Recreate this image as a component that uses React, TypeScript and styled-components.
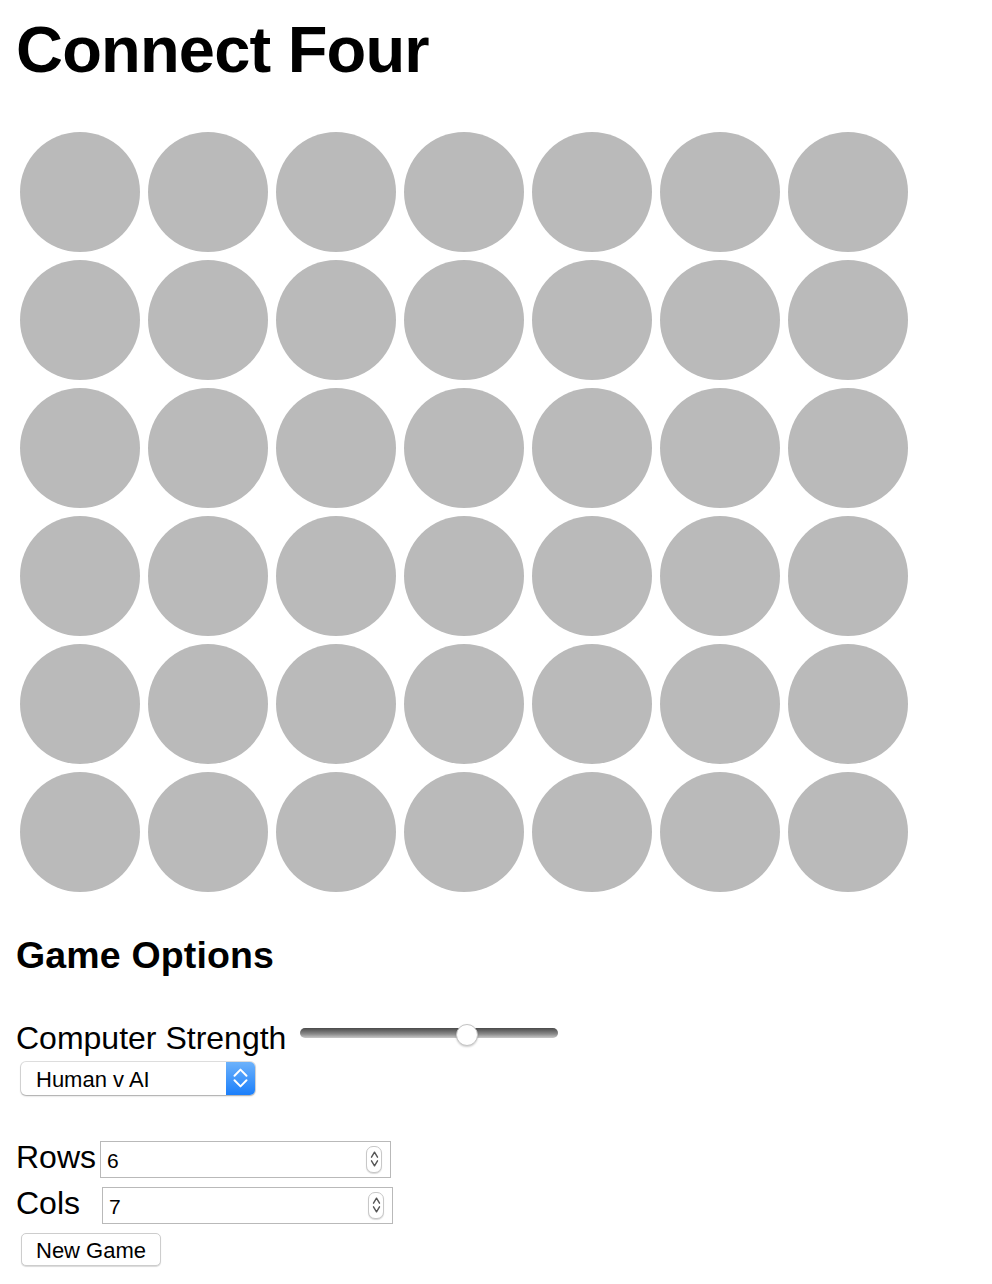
import React, { useState } from "react";
import styled, { createGlobalStyle } from "styled-components";

const GlobalStyle = createGlobalStyle`
  body {
    margin: 0;
    background: #fff;
    color: #000;
    font-family: "Liberation Sans", Arial, Helvetica, sans-serif;
  }
`;

const ROWS = 6;
const COLS = 7;

const Page = styled.div`
  display: flex;
  flex-direction: column;
  align-items: flex-start;
  padding: 0 16px 20px;
`;

const Title = styled.h1`
  margin: 17px 0 0;
  font-size: 65px;
  line-height: 65px;
  font-weight: 700;
  letter-spacing: -0.8px;
`;

const Board = styled.div<{ $cols: number }>`
  display: grid;
  grid-template-columns: repeat(${(p) => p.$cols}, 128px);
  grid-auto-rows: 128px;
  margin-top: 46px;
`;

const Cell = styled.div`
  display: flex;
  align-items: center;
  justify-content: center;
`;

const Disc = styled.div<{ $player: number }>`
  width: 120px;
  height: 120px;
  border-radius: 50%;
  background: ${(p) =>
    p.$player === 1 ? "#e53935" : p.$player === 2 ? "#fdd835" : "#bababa"};
`;

const SectionTitle = styled.h2`
  margin: 41px 0 0;
  font-size: 37.5px;
  line-height: 37.5px;
  font-weight: 700;
  letter-spacing: 0.15px;
`;

const Row = styled.div<{ $gap: number; $top: number }>`
  display: flex;
  align-items: flex-start;
  gap: ${(p) => p.$gap}px;
  margin-top: ${(p) => p.$top}px;
`;

const Label = styled.label`
  font-size: 32px;
  line-height: 32px;
`;

const Slider = styled.input`
  -webkit-appearance: none;
  appearance: none;
  width: 258px;
  height: 22px;
  margin: 0;
  background: transparent;

  &::-webkit-slider-runnable-track {
    height: 10px;
    border-radius: 5px;
    background: linear-gradient(#4a4a4a, #8a8a8a 60%, #c9c9c9);
  }

  &::-webkit-slider-thumb {
    -webkit-appearance: none;
    width: 22px;
    height: 22px;
    margin-top: -4px;
    border-radius: 50%;
    background: #fff;
    border: 1px solid #c4c4c4;
    box-shadow: 0 1px 2px rgba(0, 0, 0, 0.2);
  }
`;

const SelectBox = styled.div`
  display: flex;
  width: 234px;
  height: 33px;
  margin: 8px 0 0 5px;
  border-radius: 5px;
  box-shadow: 0 0 0 1px rgba(0, 0, 0, 0.12), 0 1px 2px rgba(0, 0, 0, 0.25);
  background: #fff;
  overflow: hidden;
`;

const NativeSelect = styled.select`
  -webkit-appearance: none;
  appearance: none;
  flex: 1;
  border: none;
  outline: none;
  background: transparent;
  padding: 2px 0 0 15px;
  font-family: inherit;
  font-size: 22px;
  color: #000;
`;

const SelectArrow = styled.div`
  width: 29px;
  flex-shrink: 0;
  display: flex;
  align-items: center;
  justify-content: center;
  background: linear-gradient(#6db2fb, #1b7ffb);
`;

const NumberWrap = styled.div`
  position: relative;
  width: 291px;
  height: 37px;
`;

const NumberInput = styled.input`
  box-sizing: border-box;
  width: 100%;
  height: 100%;
  margin: 0;
  padding: 4px 0 0 6px;
  border: 1px solid #b9b9b9;
  font-family: inherit;
  font-size: 21px;
  color: #000;
  outline: none;
  -moz-appearance: textfield;

  &::-webkit-inner-spin-button,
  &::-webkit-outer-spin-button {
    -webkit-appearance: none;
    margin: 0;
  }
`;

const Spinner = styled.div`
  position: absolute;
  right: 9px;
  top: 5px;
  width: 14px;
  height: 25px;
  border-radius: 7px;
  border: 1px solid #c8c8c8;
  background: #fff;
  box-shadow: 0 1px 1px rgba(0, 0, 0, 0.15);
  display: flex;
  align-items: center;
  justify-content: center;
`;

const Button = styled.button`
  box-sizing: border-box;
  height: 33px;
  margin: 9px 0 0 5px;
  padding: 3px 14px 0;
  background: #fff;
  border: 1px solid #cdcdcd;
  border-radius: 5px;
  box-shadow: 0 1px 1px rgba(0, 0, 0, 0.15);
  font-family: inherit;
  font-size: 22px;
  color: #000;
`;

const UpDown = ({
  color,
  w,
  h,
  stroke,
}: {
  color: string;
  w: number;
  h: number;
  stroke: number;
}) => (
  <svg width={w} height={h} viewBox={`0 0 ${w} ${h}`} fill="none">
    <path
      d={`M1.5 ${h * 0.4} ${w / 2} ${h * 0.12} ${w - 1.5} ${h * 0.4}M1.5 ${
        h * 0.6
      } ${w / 2} ${h * 0.88} ${w - 1.5} ${h * 0.6}`}
      stroke={color}
      strokeWidth={stroke}
      strokeLinecap="round"
      strokeLinejoin="round"
    />
  </svg>
);

const NumberField = ({ value }: { value: number }) => (
  <NumberWrap>
    <NumberInput type="number" defaultValue={value} />
    <Spinner>
      <UpDown color="#555" w={9} h={18} stroke={1.4} />
    </Spinner>
  </NumberWrap>
);

const App = () => {
  const [strength, setStrength] = useState(66);
  const cells = Array.from({ length: ROWS * COLS }, () => 0);

  return (
    <>
      <GlobalStyle />
      <Page>
        <Title>Connect Four</Title>
        <Board $cols={COLS}>
          {cells.map((player, i) => (
            <Cell key={i}>
              <Disc $player={player} />
            </Cell>
          ))}
        </Board>

        <SectionTitle>Game Options</SectionTitle>
        <Row $gap={14} $top={47}>
          <Label>Computer Strength</Label>
          <Slider
            type="range"
            min={0}
            max={100}
            value={strength}
            onChange={(e) => setStrength(Number(e.target.value))}
          />
        </Row>
        <SelectBox>
          <NativeSelect defaultValue="hva">
            <option value="hva">Human v AI</option>
            <option value="hvh">Human v Human</option>
            <option value="ava">AI v AI</option>
          </NativeSelect>
          <SelectArrow>
            <UpDown color="#fff" w={15} h={22} stroke={2} />
          </SelectArrow>
        </SelectBox>

        <Row $gap={4} $top={46}>
          <Label>Rows</Label>
          <NumberField value={6} />
        </Row>
        <Row $gap={22} $top={9}>
          <Label>Cols</Label>
          <NumberField value={7} />
        </Row>
        <Button>New Game</Button>
      </Page>
    </>
  );
};

export default App;
